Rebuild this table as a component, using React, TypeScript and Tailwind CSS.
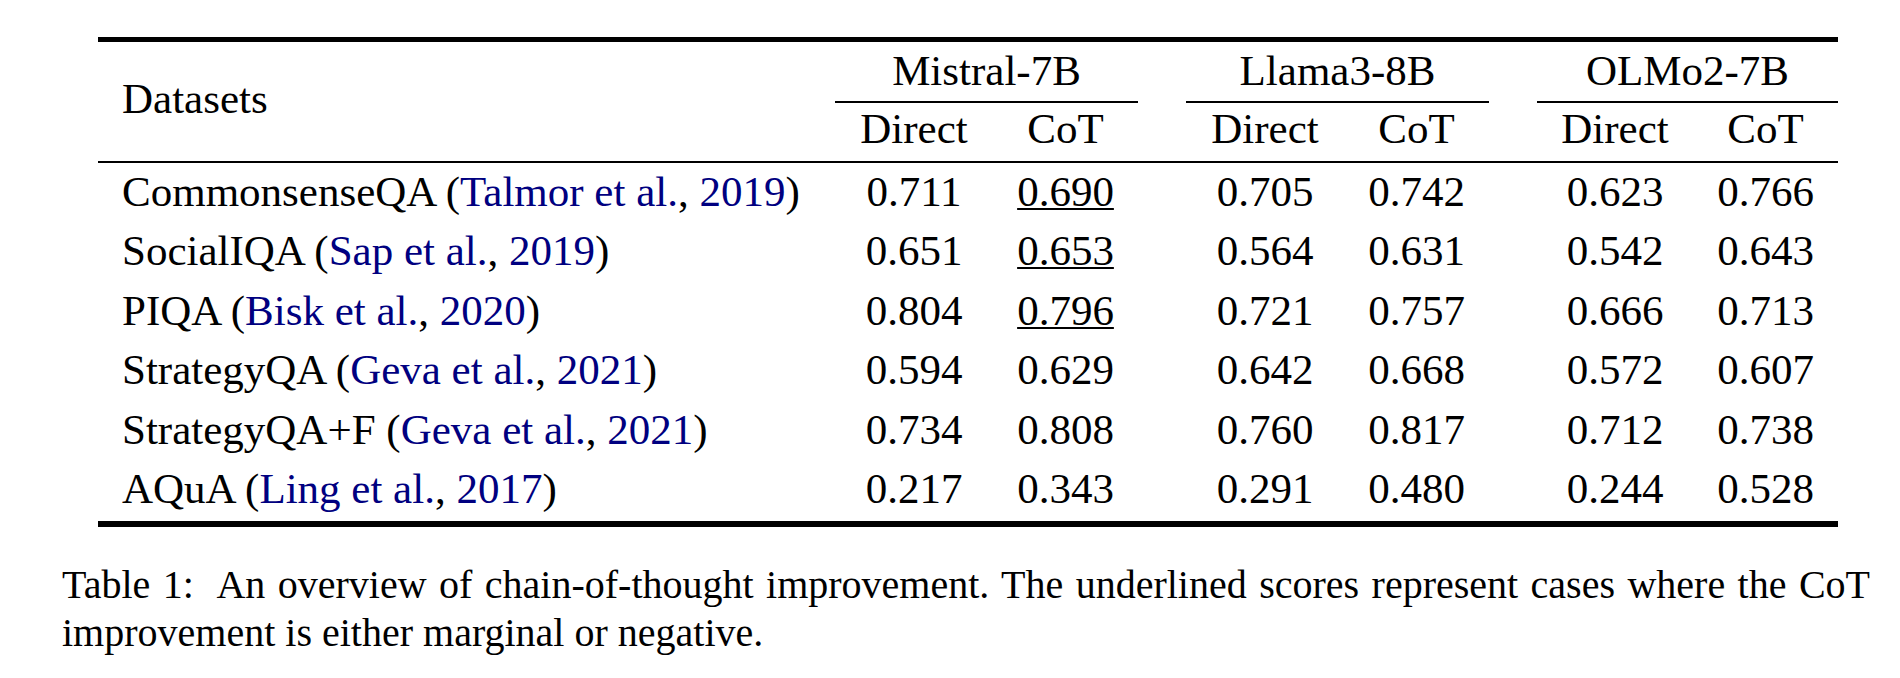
import React from "react";

type Row = {
  name: string;
  author: string;
  year: string;
  vals: string[];
  under: boolean[];
};

const rows: Row[] = [
  { name: "CommonsenseQA", author: "Talmor et al.", year: "2019", vals: ["0.711", "0.690", "0.705", "0.742", "0.623", "0.766"], under: [false, true, false, false, false, false] },
  { name: "SocialIQA", author: "Sap et al.", year: "2019", vals: ["0.651", "0.653", "0.564", "0.631", "0.542", "0.643"], under: [false, true, false, false, false, false] },
  { name: "PIQA", author: "Bisk et al.", year: "2020", vals: ["0.804", "0.796", "0.721", "0.757", "0.666", "0.713"], under: [false, true, false, false, false, false] },
  { name: "StrategyQA", author: "Geva et al.", year: "2021", vals: ["0.594", "0.629", "0.642", "0.668", "0.572", "0.607"], under: [false, false, false, false, false, false] },
  { name: "StrategyQA+F", author: "Geva et al.", year: "2021", vals: ["0.734", "0.808", "0.760", "0.817", "0.712", "0.738"], under: [false, false, false, false, false, false] },
  { name: "AQuA", author: "Ling et al.", year: "2017", vals: ["0.217", "0.343", "0.291", "0.480", "0.244", "0.528"], under: [false, false, false, false, false, false] },
];

function Num({ v, u }: { v: string; u: boolean }) {
  return (
    <div className="text-center">
      {u ? (
        <span className="underline decoration-[1.7px] underline-offset-[2px]">{v}</span>
      ) : (
        <span>{v}</span>
      )}
    </div>
  );
}

export default function App() {
  const cols =
    "grid grid-cols-[737px_158px_145px_48px_158px_145px_48px_156px_145px]";
  return (
    <div
      className="w-[1900px] h-[678px] bg-white text-black overflow-hidden text-[43px]"
      style={{ fontFamily: '"Liberation Serif", "Times New Roman", Times, serif' }}
    >
      <div className="ml-[98px] mt-[37px] w-[1740px] border-t-[5px] border-b-[6px] border-black">
        {/* Header */}
        <div className={`${cols} grid-rows-[61px_58px]`}>
          <div className="row-span-2 pl-6 pt-[28px] leading-[57px]">Datasets</div>
          <div className="col-span-2 text-center leading-[57px] border-b-2 border-black">Mistral-7B</div>
          <div />
          <div className="col-span-2 text-center leading-[57px] border-b-2 border-black">Llama3-8B</div>
          <div />
          <div className="col-span-2 text-center leading-[57px] border-b-2 border-black">OLMo2-7B</div>
          <div className="text-center leading-[51px]">Direct</div>
          <div className="text-center leading-[51px]">CoT</div>
          <div />
          <div className="text-center leading-[51px]">Direct</div>
          <div className="text-center leading-[51px]">CoT</div>
          <div />
          <div className="text-center leading-[51px]">Direct</div>
          <div className="text-center leading-[51px]">CoT</div>
        </div>
        {/* Midrule */}
        <div className="h-[2px] bg-black" />
        {/* Body */}
        <div className={`${cols} auto-rows-[59.4px] leading-[57px] pb-[2px]`}>
          {rows.map((r) => (
            <React.Fragment key={r.name}>
              <div className="pl-6 whitespace-nowrap">
                {r.name} (<span className="text-[#000080]">{r.author}</span>,{" "}
                <span className="text-[#000080]">{r.year}</span>)
              </div>
              <Num v={r.vals[0]} u={r.under[0]} />
              <Num v={r.vals[1]} u={r.under[1]} />
              <div />
              <Num v={r.vals[2]} u={r.under[2]} />
              <Num v={r.vals[3]} u={r.under[3]} />
              <div />
              <Num v={r.vals[4]} u={r.under[4]} />
              <Num v={r.vals[5]} u={r.under[5]} />
            </React.Fragment>
          ))}
        </div>
      </div>
      {/* Caption */}
      <div className="ml-[62px] mt-[34px] w-[1808px] leading-[48px] text-[40px]">
        <div className="text-justify [text-align-last:justify] whitespace-nowrap">
          Table 1:&nbsp; An overview of chain-of-thought improvement. The underlined scores represent cases where the CoT
        </div>
        <div>improvement is either marginal or negative.</div>
      </div>
    </div>
  );
}
